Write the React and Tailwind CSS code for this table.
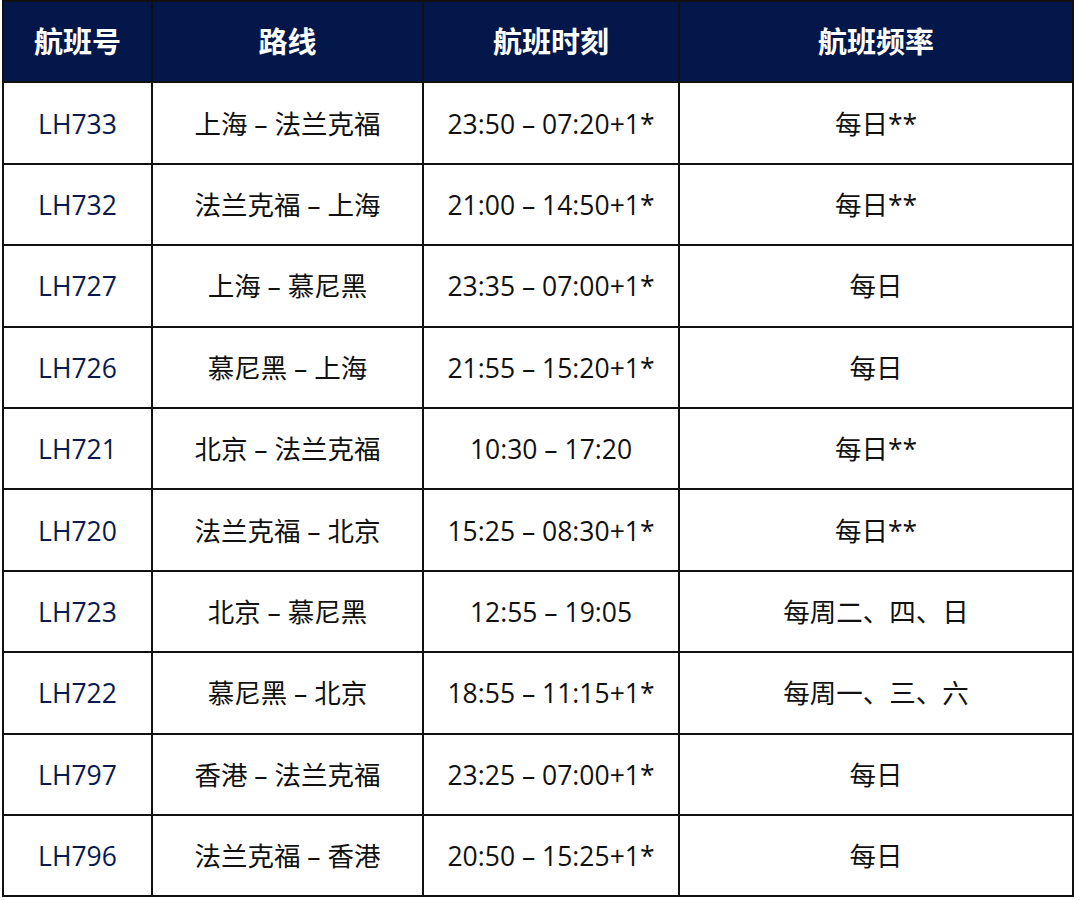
const rows = [
  ["LH733", "上海 – 法兰克福", "23:50 – 07:20+1*", "每日**"],
  ["LH732", "法兰克福 – 上海", "21:00 – 14:50+1*", "每日**"],
  ["LH727", "上海 – 慕尼黑", "23:35 – 07:00+1*", "每日"],
  ["LH726", "慕尼黑 – 上海", "21:55 – 15:20+1*", "每日"],
  ["LH721", "北京 – 法兰克福", "10:30 – 17:20", "每日**"],
  ["LH720", "法兰克福 – 北京", "15:25 – 08:30+1*", "每日**"],
  ["LH723", "北京 – 慕尼黑", "12:55 – 19:05", "每周二、四、日"],
  ["LH722", "慕尼黑 – 北京", "18:55 – 11:15+1*", "每周一、三、六"],
  ["LH797", "香港 – 法兰克福", "23:25 – 07:00+1*", "每日"],
  ["LH796", "法兰克福 – 香港", "20:50 – 15:25+1*", "每日"],
];

const headers = ["航班号", "路线", "航班时刻", "航班频率"];

const App = () => {
  return (
    <div className="w-[1080px] h-[900px] bg-white pl-[2px]">
      <div
        className="grid grid-cols-[147px_269px_254px_392px] auto-rows-[79.4px] gap-[2px] p-[2px] bg-[#111] w-[1072px] text-[26.5px]"
        style={{ fontFamily: '"Open Sans", "Noto Sans CJK SC", sans-serif' }}
      >
        {headers.map((h) => (
          <div
            key={h}
            className="bg-[#04174a] text-white font-bold text-[29px] flex items-center justify-center"
          >
            {h}
          </div>
        ))}
        {rows.map((r) => (
          <div key={r[0]} className="contents">
            <div className="bg-white text-[#0a1a4e] pt-[3px] flex items-center justify-center">
              {r[0]}
            </div>
            <div className="bg-white text-[#111] pt-[3px] flex items-center justify-center">
              {r[1]}
            </div>
            <div className="bg-white text-[#111] pt-[3px] flex items-center justify-center">
              {r[2]}
            </div>
            <div className="bg-white text-[#111] pt-[3px] flex items-center justify-center">
              {r[3]}
            </div>
          </div>
        ))}
      </div>
    </div>
  );
};

export default App;
